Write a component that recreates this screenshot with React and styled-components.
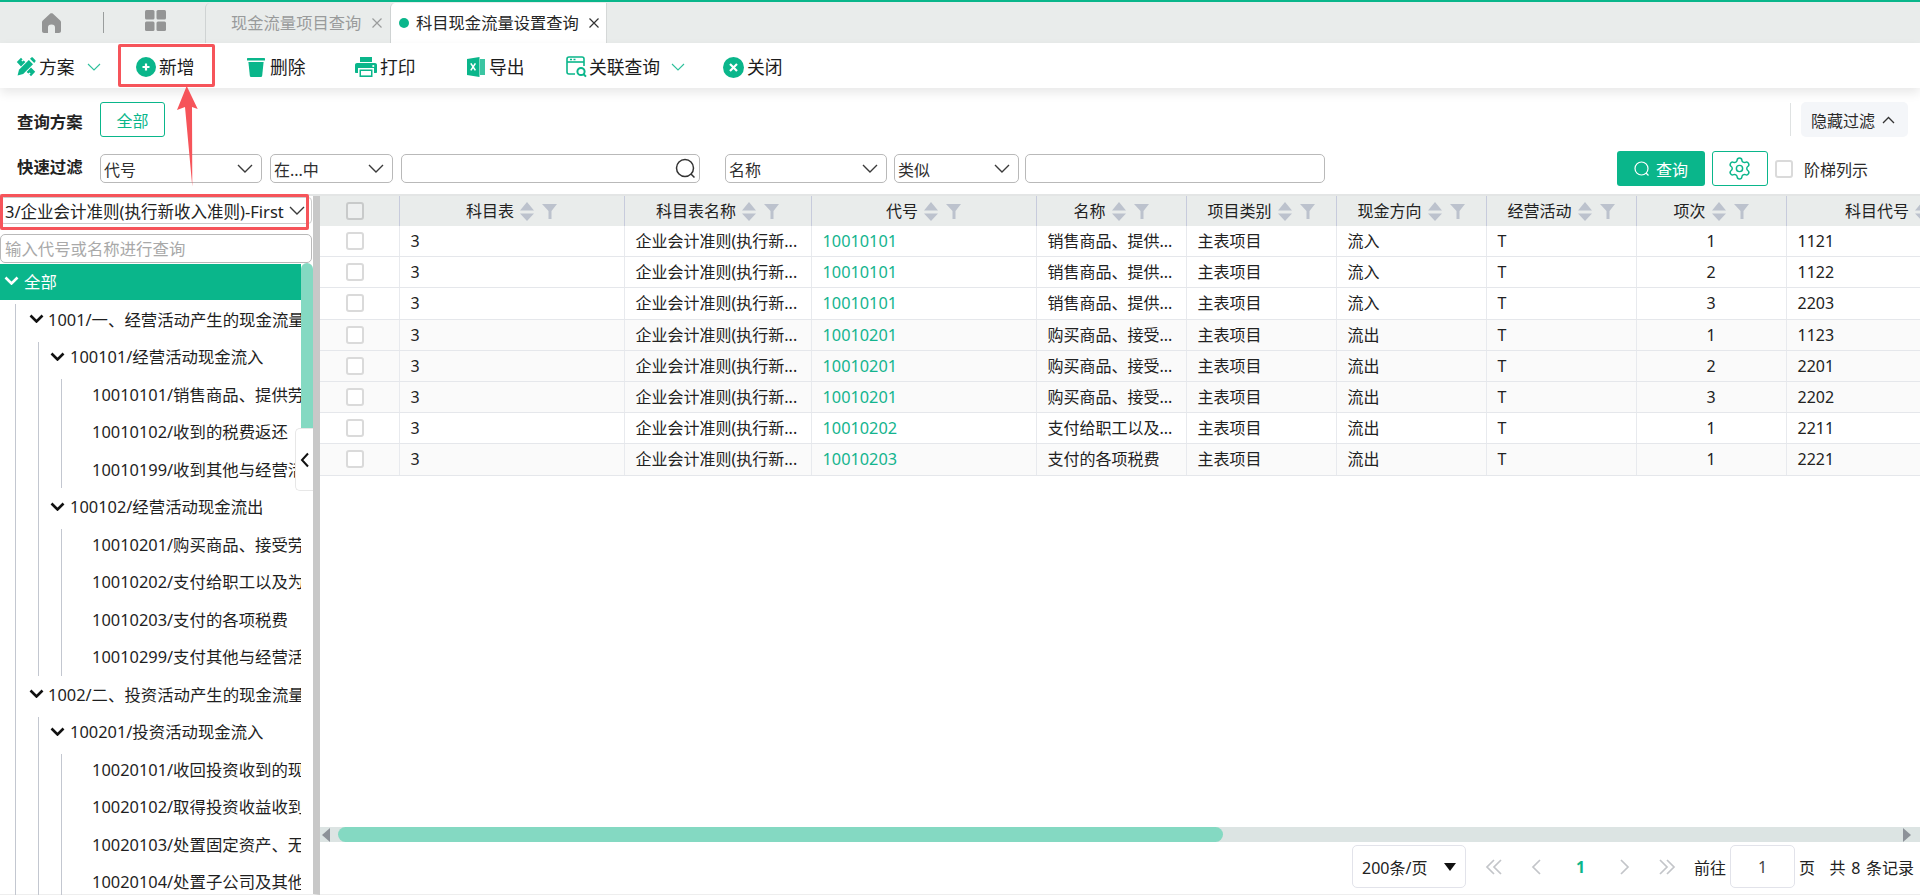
import React from "react";
import styled, { createGlobalStyle } from "styled-components";
import { Settings } from "lucide-react";

const GREEN = "#0ab68b";
const THUMB = "#84d9c2";
const FONT = `"Noto Sans", "Noto Sans CJK SC", sans-serif`;

const Global = createGlobalStyle`
  html, body { margin: 0; padding: 0; background: #fff; }
  body { font-family: ${FONT}; color: #1f1f1f; font-size: 16px; }
  * { box-sizing: border-box; }
`;

const Page = styled.div`
  position: relative;
  width: 1920px;
  height: 895px;
  overflow: hidden;
  display: flex;
  flex-direction: column;
  background: #fff;
`;

/* ---------- tab bar ---------- */
const TabBar = styled.div`
  flex: 0 0 43px;
  display: flex;
  align-items: flex-end;
  background: #e9eceb;
  border-top: 2px solid ${GREEN};
`;
const HomeCell = styled.div`
  flex: 0 0 205px;
  height: 41px;
  display: flex;
  align-items: center;
`;
const HomeSlot = styled.span`
  display: flex;
  margin-left: ${(p) => p.$ml}px;
  margin-top: ${(p) => p.$mt}px;
`;
const VBar = styled.span`
  width: 1px;
  height: 21px;
  margin-left: 42px;
  background: #9a9d9d;
`;
const Tab = styled.div`
  flex: 0 0 ${(p) => p.$w}px;
  height: 40px;
  display: flex;
  align-items: center;
  padding-left: ${(p) => p.$pl}px;
  font-size: 16.3px;
  line-height: 22px;
  white-space: nowrap;
  color: ${(p) => (p.$active ? "#262626" : "#999b9b")};
  background: ${(p) => (p.$active ? "#fff" : "transparent")};
  border-left: 1px solid #cfd3d3;
  border-right: ${(p) => (p.$active ? "1px solid #d5d8d8" : "none")};
  border-top-left-radius: 5px;
`;
const Dot = styled.span`
  width: 10px;
  height: 10px;
  border-radius: 50%;
  background: ${GREEN};
  margin-right: 7px;
`;
const CloseMark = styled.svg`
  width: 10px;
  height: 10px;
  margin-left: ${(p) => p.$ml}px;
  stroke: ${(p) => p.$c};
  stroke-width: 1.2;
`;

/* ---------- toolbar ---------- */
const Toolbar = styled.div`
  position: relative;
  z-index: 2;
  flex: 0 0 45px;
  display: flex;
  align-items: center;
  padding: 3px 0 0 16px;
  background: #fff;
  box-shadow: 0 5px 10px rgba(0, 0, 0, 0.09);
`;
const ToolItem = styled.div`
  flex: 0 0 ${(p) => p.$w}px;
  display: flex;
  align-items: center;
  gap: ${(p) => p.$gap ?? 3}px;
  font-size: 17.8px;
  line-height: 24px;
  color: #1c1c1c;
  white-space: nowrap;
`;
const ToolChevron = styled.svg`
  width: 14px;
  height: 8px;
  margin-left: 9px;
  fill: none;
  stroke: ${GREEN};
  stroke-width: 1.1;
  opacity: 0.85;
`;

/* ---------- filter ---------- */
const Filter = styled.div`
  flex: 0 0 106px;
  padding-top: 14px;
  display: flex;
  flex-direction: column;
  gap: 14px;
`;
const FilterRow = styled.div`
  height: 35px;
  display: flex;
  align-items: center;
  padding-left: 17px;
  padding-right: ${(p) => p.$pr}px;
`;
const Label = styled.span`
  flex: 0 0 83px;
  margin-top: ${(p) => p.$mt ?? 0}px;
  margin-bottom: ${(p) => p.$mb ?? 0}px;
  font-size: 16.4px;
  font-weight: 700;
  line-height: 22px;
  color: #222;
  white-space: nowrap;
`;
const SchemeButton = styled.button`
  width: 65px;
  height: 35px;
  padding: 0;
  font: inherit;
  font-size: 16px;
  color: ${GREEN};
  background: #fff;
  border: 1px solid ${GREEN};
  border-radius: 3px;
`;
const Grow = styled.span`
  flex: 1;
`;
const VDivider = styled.span`
  width: 1px;
  height: 33px;
  margin-right: 10px;
  background: #dfe2e2;
`;
const HideButton = styled.div`
  width: 107px;
  height: 35px;
  display: flex;
  align-items: center;
  gap: 7px;
  padding-left: 10px;
  font-size: 16px;
  color: #2b2b2b;
  white-space: nowrap;
  background: #f4f6f9;
  border-radius: 5px;
`;
const ChevUp = styled.svg`
  width: 13px;
  height: 8px;
  fill: none;
  stroke: #333;
  stroke-width: 1.3;
`;
const Select = styled.div`
  flex: 0 0 ${(p) => p.$w}px;
  height: 29px;
  margin-left: ${(p) => p.$ml ?? 0}px;
  display: flex;
  align-items: center;
  justify-content: space-between;
  padding: 0 8px 0 3px;
  font-size: 16px;
  color: #2f2f2f;
  background: #fff;
  border: 1px solid #b9b9b9;
  border-radius: 5px;
  white-space: nowrap;
`;
const SelectChev = styled.svg`
  width: 16px;
  height: 9px;
  fill: none;
  stroke: #3a3a3a;
  stroke-width: 1.4;
`;
const TextInput = styled(Select)`
  padding-right: 0;
  justify-content: flex-end;
`;
const QueryButton = styled.div`
  flex: 0 0 88px;
  height: 35px;
  display: flex;
  align-items: center;
  justify-content: center;
  gap: 6px;
  color: #fff;
  font-size: 16px;
  background: ${GREEN};
  border-radius: 3px;
`;
const GearButton = styled.div`
  flex: 0 0 56px;
  height: 35px;
  margin-left: 7px;
  display: flex;
  align-items: center;
  justify-content: center;
  color: ${GREEN};
  background: #fff;
  border: 1px solid ${GREEN};
  border-radius: 3px;
`;
const Check = styled.span`
  flex: 0 0 18px;
  display: block;
  width: 18px;
  height: 18px;
  margin-left: ${(p) => p.$ml ?? 0}px;
  background: ${(p) => p.$bg ?? "#fff"};
  border: 2px solid ${(p) => p.$line ?? "#dadada"};
  border-radius: 3px;
`;
const StepLabel = styled.span`
  margin-left: 11px;
  font-size: 16px;
  color: #2b2b2b;
  white-space: nowrap;
`;

/* ---------- main ---------- */
const Main = styled.div`
  flex: 1;
  min-height: 0;
  display: flex;
  border-top: 2px solid #e3e5e5;
`;
const Sidebar = styled.aside`
  position: relative;
  flex: 0 0 320px;
  display: flex;
  flex-direction: column;
  border-right: 7px solid #c8c8c8;
  border-bottom: 1px solid #eee;
`;
const TreeSelect = styled.div`
  margin: 1px 1px 0 0;
  height: 27px;
  flex: 0 0 27px;
  display: flex;
  align-items: center;
  justify-content: space-between;
  padding: 0 6px 0 4px;
  font-size: 16.5px;
  white-space: nowrap;
  color: #222;
  border: 1px solid #ccc;
  border-radius: 4px;
`;
const TreeSearch = styled.div`
  margin: 10px 1px 0 0;
  flex: 0 0 29px;
  display: flex;
  align-items: center;
  padding: 0 0 1px 4px;
  font-size: 16.4px;
  color: #a9a9a9;
  white-space: nowrap;
  border: 1px solid #b9b9b9;
  border-radius: 5px;
`;
const TreeBody = styled.div`
  flex: 0 0 622px;
  display: flex;
`;
const TreeClip = styled.div`
  flex: 0 0 301px;
  overflow: hidden;
`;
const VScroll = styled.div`
  flex: 0 0 12px;
`;
const VThumb = styled.div`
  height: 167px;
  background: ${THUMB};
  border-radius: 6px 6px 0 0;
`;
const RootRow = styled.div`
  height: 35.5px;
  margin: 1px 0;
  display: flex;
  align-items: center;
  gap: 5px;
  padding: 0 0 2px 4px;
  color: #fff;
  font-size: 16.4px;
  background: ${GREEN};
`;
const TreeRow = styled.div`
  height: 37.5px;
  display: flex;
  align-items: center;
  gap: ${(p) => p.$gap ?? 4}px;
  padding: 0 0 1px ${(p) => p.$pl}px;
  font-size: 16.4px;
  color: #1f1f1f;
  white-space: nowrap;
`;
const TreeChev = styled.svg`
  flex: 0 0 15px;
  width: 15px;
  height: 9px;
  fill: none;
  stroke: ${(p) => p.$c ?? "#111"};
  stroke-width: 2.6;
`;
const Branch = styled.div`
  position: relative;
  margin-left: ${(p) => p.$ml}px;
  &::before {
    content: "";
    position: absolute;
    left: 0;
    top: 3.5px;
    bottom: 0;
    width: 1px;
    background: #c3c7d0;
  }
`;
const CollapseTab = styled.div`
  position: absolute;
  left: 295px;
  top: 232px;
  width: 18px;
  height: 63px;
  display: flex;
  align-items: center;
  justify-content: center;
  background: #fff;
  border: 1px solid #e7e7e7;
  border-right: none;
  border-radius: 5px 0 0 5px;
`;

const TableArea = styled.section`
  flex: 1;
  min-width: 0;
  display: flex;
  flex-direction: column;
`;
const TableScroller = styled.div`
  flex: 1;
  min-height: 0;
  overflow: hidden;
`;
const HeadRow = styled.div`
  display: flex;
  width: 1691.5px;
  height: 30px;
  background: #e9eceb;
`;
const HeadCell = styled.div`
  flex: 0 0 ${(p) => p.$w}px;
  display: flex;
  align-items: center;
  justify-content: center;
  font-size: 16px;
  line-height: 22px;
  color: #222;
  white-space: nowrap;
  border-right: 1px solid #c7cbdc;
`;
const SortIcon = styled.svg`
  flex: 0 0 14px;
  width: 14px;
  height: 19px;
  margin: 0 8px 0 6px;
  fill: #bcc2cd;
`;
const FilterIcon = styled.svg`
  flex: 0 0 15px;
  width: 15px;
  height: 15px;
  fill: #bcc2cd;
`;
const BodyRow = styled.div`
  display: flex;
  width: 1691.5px;
  height: 31.2px;
  background: ${(p) => (p.$alt ? "#fafafa" : "#fff")};
  border-bottom: 1px solid #e5e7eb;
`;
const Cell = styled.div`
  flex: 0 0 ${(p) => p.$w}px;
  min-width: 0;
  padding: 0 11px;
  font-size: ${(p) => (p.$link ? 16.3 : 16)}px;
  line-height: 31px;
  text-align: ${(p) => p.$align ?? "left"};
  color: ${(p) => (p.$link ? "#14b48e" : "#222")};
  white-space: nowrap;
  border-right: 1px solid #e8eaee;
`;
const CheckCell = styled.div`
  flex: 0 0 ${(p) => p.$w}px;
  display: flex;
  align-items: center;
  padding-left: 25.5px;
  border-right: 1px solid ${(p) => p.$line};
`;
const HScroll = styled.div`
  flex: 0 0 15px;
  display: flex;
  align-items: center;
  padding: 0 9px 0 2px;
  background: #dce4e3;
`;
const HThumb = styled.div`
  width: 885px;
  height: 15px;
  margin-left: 8px;
  background: ${THUMB};
  border-radius: 8px;
`;
const ArrowMark = styled.svg`
  width: 8px;
  height: 14px;
  fill: #8d9299;
  margin-left: ${(p) => (p.$end ? "auto" : "0")};
`;
const Pager = styled.div`
  flex: 0 0 53px;
  display: flex;
  align-items: center;
  justify-content: flex-end;
  padding: 0 6px 3px 0;
  font-size: 16px;
  color: #222;
  white-space: nowrap;
  border-bottom: 1px solid #eee;
`;
const SizeSelect = styled.div`
  width: 114px;
  height: 43px;
  margin-right: 6px;
  display: flex;
  align-items: center;
  justify-content: space-between;
  padding: 0 9px 0 9px;
  background: #fff;
  border: 1px solid #e2e3ea;
  border-radius: 5px;
`;
const Caret = styled.span`
  width: 0;
  height: 0;
  border-left: 6px solid transparent;
  border-right: 6px solid transparent;
  border-top: 8px solid #111;
`;
const PageBtn = styled.div`
  flex: 0 0 43.4px;
  display: flex;
  align-items: center;
  justify-content: center;
  font-weight: 700;
  color: ${GREEN};
`;
const PageGlyph = styled.svg`
  width: 18px;
  height: 18px;
  fill: none;
  stroke: #c3c5c9;
  stroke-width: 1.7;
`;
const PageInput = styled.div`
  width: 65px;
  height: 43px;
  margin: 0 4px;
  display: flex;
  align-items: center;
  justify-content: center;
  color: #444;
  background: #fff;
  border: 1px solid #e2e3ea;
  border-radius: 5px;
`;
const PagerText = styled.span`
  margin-left: ${(p) => p.$ml ?? 0}px;
  word-spacing: ${(p) => p.$ws ?? 0}px;
`;

/* ---------- annotations ---------- */
const RedBox = styled.div`
  position: absolute;
  z-index: 5;
  left: ${(p) => p.$l}px;
  top: ${(p) => p.$t}px;
  width: ${(p) => p.$w}px;
  height: ${(p) => p.$h}px;
  border: 3px solid #f6545a;
  border-radius: 2px;
  pointer-events: none;
`;
const RedArrow = styled.svg`
  position: absolute;
  z-index: 6;
  left: 170px;
  top: 84px;
  width: 36px;
  height: 106px;
  fill: #f6545a;
`;

/* ---------- icons ---------- */
const I = styled.svg`
  flex: 0 0 auto;
  display: block;
  fill: ${GREEN};
`;
const PlanIcon = () => (
  <I width="20" height="20" viewBox="0 0 20 20">
    <path d="M.8 5 5 .8l1.600 1.600-1.200 1.200 1 1 1.200-1.200L9.400 5 5 9.400z" />
    <path d="M10.600 15 15 10.600l4.200 4.200L15 19.200l-1.600-1.600 1.200-1.200-1-1-1.200 1.200z" />
    <path d="M3 12.800 12.800 3l4.200 4.200L7.200 17 1.600 18.400z" />
    <path d="M14 1.800 15.400.6c.4-.4 1-.4 1.400 0l2.600 2.600c.4.4.4 1 0 1.400L18.200 6z" />
  </I>
);
const AddIcon = () => (
  <I width="20" height="20" viewBox="0 0 20 20">
    <circle cx="10" cy="10" r="10" />
    <path d="M10 6.500v7M6.500 10h7" stroke="#fff" strokeWidth="2.200" />
  </I>
);
const TrashIcon = () => (
  <I width="18" height="20" viewBox="0 0 18 20">
    <rect x="0" y="1" width="18" height="2.600" rx="0.600" />
    <path d="M1.400 5h15.200l-1.400 13.400c-.1.900-.8 1.600-1.700 1.600H4.500c-.9 0-1.600-.7-1.700-1.600z" />
  </I>
);
const PrintIcon = () => (
  <I width="22" height="20" viewBox="0 0 22 20">
    <path d="M5 0h12v5H5z" />
    <path d="M2 6h18c1.100 0 2 .9 2 2v7c0 .6-.4 1-1 1h-2v-5H3v5H1c-.6 0-1-.4-1-1V8c0-1.100.9-2 2-2z" />
    <path d="M4.500 12.500h13V20h-13z" />
    <path d="M6 14h10v4.400H6z" fill="#fff" />
    <circle cx="18.300" cy="9" r="1.100" fill="#fff" />
  </I>
);
const ExcelIcon = () => (
  <I width="18" height="20" viewBox="0 0 18 20">
    <path d="M13 2h5v16h-5z" opacity="0.8" />
    <path d="M0 2 12.500 0v20L0 18z" />
    <path d="M3.800 6.400 8.400 13.400M8.400 6.400 3.800 13.400" stroke="#fff" strokeWidth="1.600" fill="none" />
  </I>
);
const RelatedIcon = () => (
  <svg width="21" height="22" viewBox="0 0 21 22" fill="none" stroke={GREEN} strokeWidth="1.600" style={{ display: "block", flex: "0 0 auto" }}>
    <path d="M9 18H3c-1.100 0-2-.9-2-2V3c0-1.100.9-2 2-2h13c1.100 0 2 .9 2 2v7" />
    <path d="M1 6h17" />
    <path d="M4 3.500h2M7.500 3.500h2" strokeWidth="1.400" />
    <circle cx="15" cy="15.500" r="3.600" strokeWidth="2" />
    <path d="M17.600 18.200 20 20.600" strokeWidth="2" />
  </svg>
);
const CloseIcon = () => (
  <I width="21" height="21" viewBox="0 0 21 21">
    <circle cx="10.500" cy="10.500" r="10.500" />
    <path d="M7 7l7 7M14 7l-7 7" stroke="#fff" strokeWidth="2.200" />
  </I>
);
const Chev = () => (
  <ToolChevron viewBox="0 0 14 8">
    <path d="M1 1l6 6 6-6" />
  </ToolChevron>
);
const SelChev = () => (
  <SelectChev viewBox="0 0 16 9">
    <path d="M1 1l7 7 7-7" />
  </SelectChev>
);
const TChev = ({ c }) => (
  <TreeChev viewBox="0 0 15 9" $c={c}>
    <path d="M1.500 1.500 7.500 7.500l6-6" />
  </TreeChev>
);
const X = ({ c, ml }) => (
  <CloseMark viewBox="0 0 10 10" $c={c} $ml={ml}>
    <path d="M.5.5l9 9M9.500.5l-9 9" />
  </CloseMark>
);
const Sort = () => (
  <SortIcon viewBox="0 0 14 19">
    <path d="M7 0l7 8.500H0zM7 19l-7-7.500h14z" />
  </SortIcon>
);
const Funnel = () => (
  <FilterIcon viewBox="0 0 15 15">
    <path d="M0 0h15L9.500 7v8h-3V7z" />
  </FilterIcon>
);

/* ---------- data ---------- */
const COLS = [
  { key: "t", label: "科目表", w: 225 },
  { key: "n", label: "科目表名称", w: 187 },
  { key: "c", label: "代号", w: 225, link: true },
  { key: "m", label: "名称", w: 150 },
  { key: "k", label: "项目类别", w: 150 },
  { key: "d", label: "现金方向", w: 150 },
  { key: "a", label: "经营活动", w: 150 },
  { key: "i", label: "项次", w: 150, align: "center" },
  { key: "s", label: "科目代号", w: 225 },
];
const base = { t: "3", n: "企业会计准则(执行新...", k: "主表项目", a: "T" };
const S1 = "销售商品、提供...";
const S2 = "购买商品、接受...";
const ROWS = [
  { ...base, c: "10010101", m: S1, d: "流入", i: "1", s: "1121" },
  { ...base, c: "10010101", m: S1, d: "流入", i: "2", s: "1122" },
  { ...base, c: "10010101", m: S1, d: "流入", i: "3", s: "2203" },
  { ...base, c: "10010201", m: S2, d: "流出", i: "1", s: "1123", alt: true },
  { ...base, c: "10010201", m: S2, d: "流出", i: "2", s: "2201", alt: true },
  { ...base, c: "10010201", m: S2, d: "流出", i: "3", s: "2202", alt: true },
  { ...base, c: "10010202", m: "支付给职工以及...", d: "流出", i: "1", s: "2211" },
  { ...base, c: "10010203", m: "支付的各项税费", d: "流出", i: "1", s: "2221", alt: true },
];

const Leaves = ({ items }) => (
  <Branch $ml={22.5}>
    {items.map((t) => (
      <TreeRow key={t} $pl={31.5}>{t}</TreeRow>
    ))}
  </Branch>
);

export default function App() {
  return (
    <Page>
      <Global />
      <TabBar>
        <HomeCell>
          <HomeSlot $ml={42} $mt={0}>
            <svg width="19" height="20" viewBox="0 0 19 20" fill="#949595">
              <path d="M8.300.6c.7-.6 1.700-.6 2.400 0l7.500 6.800c.5.500.8 1.100.8 1.800V18c0 1.100-.9 2-2 2h-4v-5.500c0-1.800-1-3-3.500-3s-3.500 1.200-3.500 3V20H2c-1.100 0-2-.9-2-2V9.200c0-.7.3-1.300.8-1.800z" />
            </svg>
          </HomeSlot>
          <VBar />
          <HomeSlot $ml={41} $mt={-4}>
            <svg width="21" height="21" viewBox="0 0 21 21" fill="#949595">
              <rect width="9.500" height="9.500" rx="1.500" />
              <rect x="11.500" width="9.500" height="9.500" rx="1.500" />
              <rect y="11.500" width="9.500" height="9.500" rx="1.500" />
              <rect x="11.500" y="11.500" width="9.500" height="9.500" rx="1.500" />
            </svg>
          </HomeSlot>
        </HomeCell>
        <Tab $w={185} $pl={25}>
          现金流量项目查询
          <X c="#9a9c9c" ml={11} />
        </Tab>
        <Tab $w={217} $pl={8} $active>
          <Dot />
          科目现金流量设置查询
          <X c="#333" ml={10} />
        </Tab>
      </TabBar>

      <Toolbar>
        <ToolItem $w={120}>
          <PlanIcon />
          方案
          <Chev />
        </ToolItem>
        <ToolItem $w={111}>
          <AddIcon />
          新增
        </ToolItem>
        <ToolItem $w={108} $gap={5}>
          <TrashIcon />
          删除
        </ToolItem>
        <ToolItem $w={112}>
          <PrintIcon />
          打印
        </ToolItem>
        <ToolItem $w={99} $gap={4}>
          <ExcelIcon />
          导出
        </ToolItem>
        <ToolItem $w={157} $gap={2}>
          <RelatedIcon />
          关联查询
          <Chev />
        </ToolItem>
        <ToolItem $w={70}>
          <CloseIcon />
          关闭
        </ToolItem>
      </Toolbar>

      <Filter>
        <FilterRow $pr={12}>
          <Label $mt={5}>查询方案</Label>
          <SchemeButton>全部</SchemeButton>
          <Grow />
          <VDivider />
          <HideButton>
            隐藏过滤
            <ChevUp viewBox="0 0 13 8">
              <path d="M1 7l5.500-5.500L12 7" />
            </ChevUp>
          </HideButton>
        </FilterRow>
        <FilterRow $pr={52}>
          <Label $mb={3}>快速过滤</Label>
          <Select $w={162}>代号<SelChev /></Select>
          <Select $w={123} $ml={8}>在...中<SelChev /></Select>
          <TextInput $w={299} $ml={8}>
            <svg width="26" height="26" viewBox="0 0 26 26" fill="none" stroke="#333" strokeWidth="1.500">
              <circle cx="12" cy="12" r="8.500" />
              <path d="M18 18l3.500 3.500" />
            </svg>
          </TextInput>
          <Select $w={162} $ml={25}>名称<SelChev /></Select>
          <Select $w={125} $ml={7}>类似<SelChev /></Select>
          <Select $w={300} $ml={6} />
          <Grow />
          <QueryButton>
            <svg width="16" height="16" viewBox="0 0 16 16" fill="none" stroke="#fff" strokeWidth="1.200">
              <circle cx="7.500" cy="7.500" r="6.500" />
              <path d="M12 12l2.500 2.500" />
            </svg>
            查询
          </QueryButton>
          <GearButton>
            <Settings size={25} strokeWidth={1.400} />
          </GearButton>
          <Check $ml={7} />
          <StepLabel>阶梯列示</StepLabel>
        </FilterRow>
      </Filter>

      <Main>
        <Sidebar>
          <TreeSelect>
            3/企业会计准则(执行新收入准则)-First
            <SelChev />
          </TreeSelect>
          <TreeSearch>输入代号或名称进行查询</TreeSearch>
          <TreeBody>
            <TreeClip>
              <RootRow>
                <TChev c="#fff" />
                全部
              </RootRow>
              <Branch $ml={15}>
                <TreeRow $pl={14}><TChev />1001/一、经营活动产生的现金流量</TreeRow>
                <Branch $ml={23}>
                  <TreeRow $pl={12} $gap={5}><TChev />100101/经营活动现金流入</TreeRow>
                  <Leaves items={["10010101/销售商品、提供劳", "10010102/收到的税费返还", "10010199/收到其他与经营活"]} />
                  <TreeRow $pl={12} $gap={5}><TChev />100102/经营活动现金流出</TreeRow>
                  <Leaves items={["10010201/购买商品、接受劳", "10010202/支付给职工以及为", "10010203/支付的各项税费", "10010299/支付其他与经营活"]} />
                </Branch>
                <TreeRow $pl={14}><TChev />1002/二、投资活动产生的现金流量</TreeRow>
                <Branch $ml={23}>
                  <TreeRow $pl={12} $gap={5}><TChev />100201/投资活动现金流入</TreeRow>
                  <Leaves items={["10020101/收回投资收到的现", "10020102/取得投资收益收到", "10020103/处置固定资产、无", "10020104/处置子公司及其他"]} />
                </Branch>
              </Branch>
            </TreeClip>
            <VScroll>
              <VThumb />
            </VScroll>
          </TreeBody>
          <CollapseTab>
            <svg width="10" height="16" viewBox="0 0 10 16" fill="none" stroke="#111" strokeWidth="2">
              <path d="M8 1.500 2 8l6 6.500" />
            </svg>
          </CollapseTab>
        </Sidebar>

        <TableArea>
          <TableScroller>
            <HeadRow>
              <CheckCell $w={79.5} $line="#c7cbdc">
                <Check $bg="#eef0f0" $line="#c8caca" />
              </CheckCell>
              {COLS.map((c) => (
                <HeadCell key={c.key} $w={c.w}>
                  {c.label}
                  <Sort />
                  <Funnel />
                </HeadCell>
              ))}
            </HeadRow>
            {ROWS.map((r, i) => (
              <BodyRow key={i} $alt={r.alt}>
                <CheckCell $w={79.5} $line="#e8eaee">
                  <Check />
                </CheckCell>
                {COLS.map((c) => (
                  <Cell key={c.key} $w={c.w} $align={c.align} $link={c.link}>
                    {r[c.key]}
                  </Cell>
                ))}
              </BodyRow>
            ))}
          </TableScroller>
          <HScroll>
            <ArrowMark viewBox="0 0 8 14"><path d="M8 0v14L0 7z" /></ArrowMark>
            <HThumb />
            <ArrowMark viewBox="0 0 8 14" $end><path d="M0 0v14l8-7z" /></ArrowMark>
          </HScroll>
          <Pager>
            <SizeSelect>
              200条/页
              <Caret />
            </SizeSelect>
            <PageBtn><PageGlyph viewBox="0 0 18 18"><path d="M9 2 2 9l7 7M16 2 9 9l7 7" /></PageGlyph></PageBtn>
            <PageBtn><PageGlyph viewBox="0 0 18 18"><path d="M12 2 5 9l7 7" /></PageGlyph></PageBtn>
            <PageBtn>1</PageBtn>
            <PageBtn><PageGlyph viewBox="0 0 18 18"><path d="M6 2l7 7-7 7" /></PageGlyph></PageBtn>
            <PageBtn><PageGlyph viewBox="0 0 18 18"><path d="M2 2l7 7-7 7M9 2l7 7-7 7" /></PageGlyph></PageBtn>
            <PagerText $ml={5}>前往</PagerText>
            <PageInput>1</PageInput>
            <PagerText>页</PagerText>
            <PagerText $ml={14.5} $ws={1.500}>共 8 条记录</PagerText>
          </Pager>
        </TableArea>
      </Main>

      <RedBox $l={118} $t={44} $w={97} $h={43} />
      <RedBox $l={0} $t={194} $w={309} $h={36} />
      <RedArrow viewBox="0 0 36 106">
        <path d="M16.700 2 27.700 25 22 23 22.300 102.700 15 23 7 26z" />
      </RedArrow>
    </Page>
  );
}
